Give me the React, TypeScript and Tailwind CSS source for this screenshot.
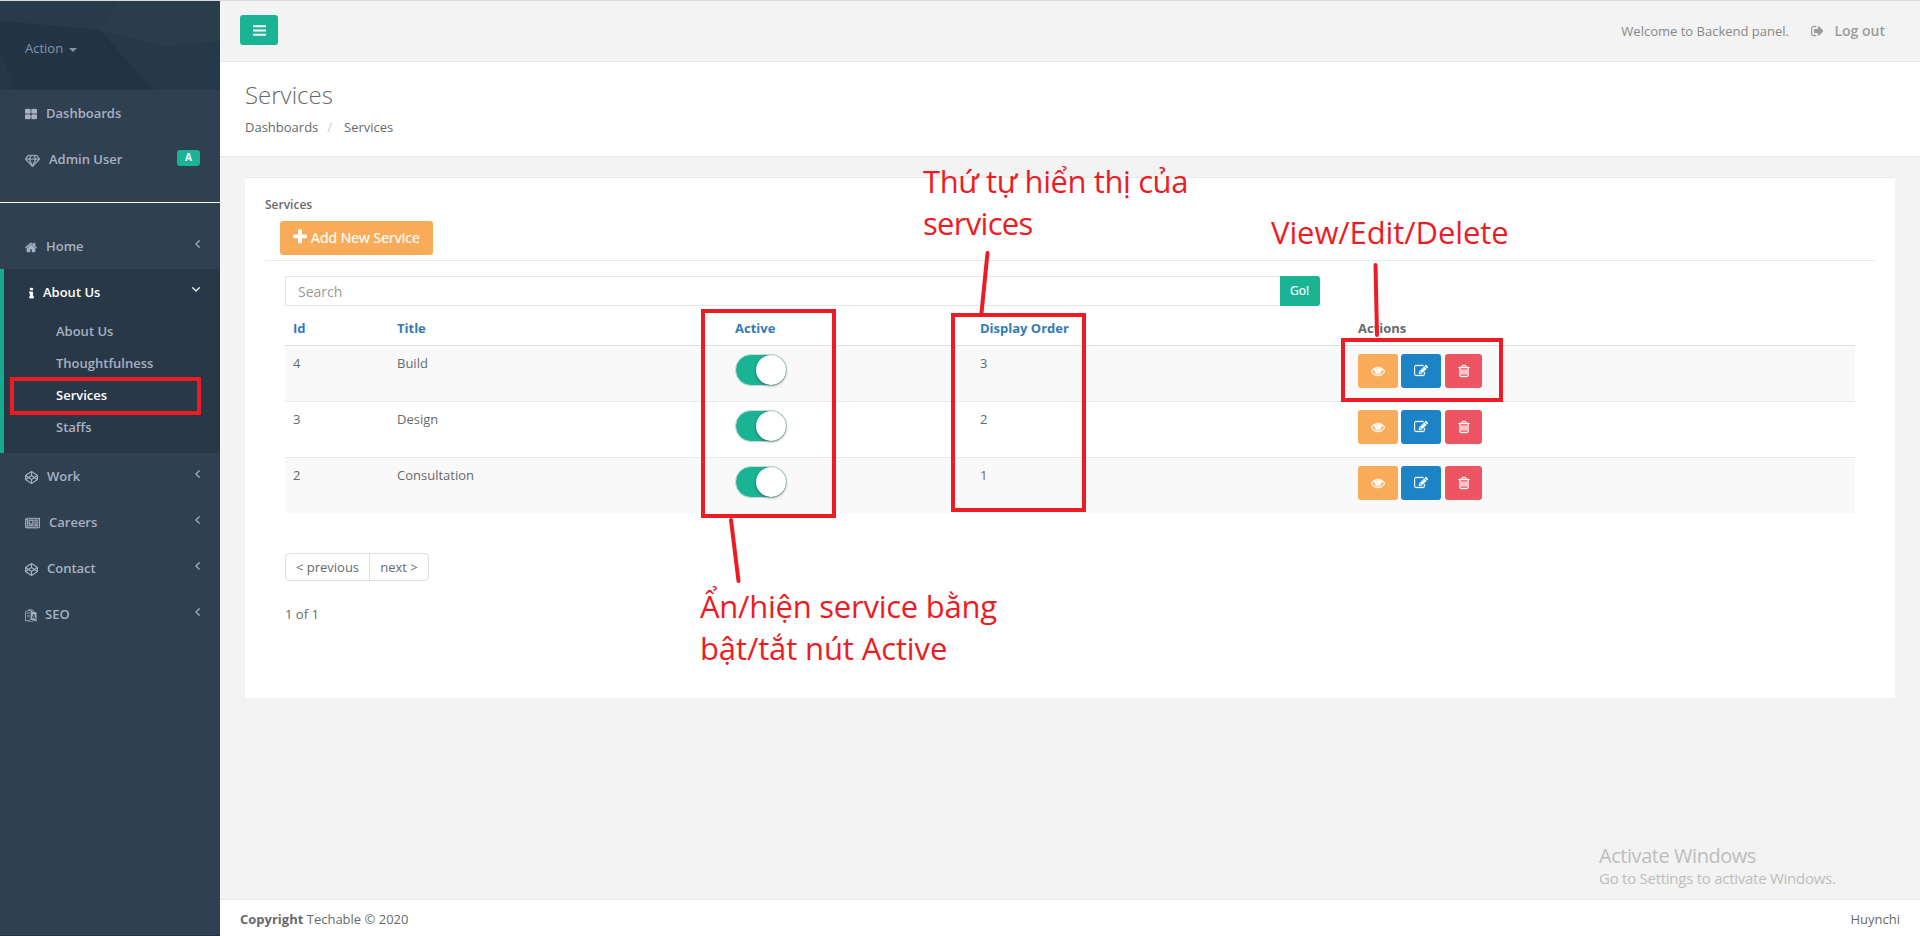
import React from "react";
import { FaCodepen } from "react-icons/fa";

const RED = "#ed1c24";

const PATHS = {
  thLarge:
    "M832 1024v384q0 52-38 90t-90 38h-512q-52 0-90-38t-38-90v-384q0-52 38-90t90-38h512q52 0 90 38t38 90zm0-768v384q0 52-38 90t-90 38h-512q-52 0-90-38t-38-90v-384q0-52 38-90t90-38h512q52 0 90 38t38 90zm896 768v384q0 52-38 90t-90 38h-512q-52 0-90-38t-38-90v-384q0-52 38-90t90-38h512q52 0 90 38t38 90zm0-768v384q0 52-38 90t-90 38h-512q-52 0-90-38t-38-90v-384q0-52 38-90t90-38h512q52 0 90 38t38 90z",
  diamond:
    "M212 768l623 665-300-665h-323zm812 772l349-772h-698zM538 640l204-384h-262l-288 384h346zm675 793l623-665h-323zm-530-793h682l-204-384h-274zm827 0h346l-288-384h-262zm141-487l384 512q14 18 13 41.500t-17 40.500l-960 1024q-18 20-47 20t-47-20l-960-1024q-16-17-17-40.500t13-41.500l384-512q18-25 51-25h1152q33 0 51 25z",
  home: "M1472 992v480q0 26-19 45t-45 19h-384v-384h-256v384h-384q-26 0-45-19t-19-45v-480q0-1 .5-3t.5-3l575-474 575 474q1 2 1 6zm223-69l-62 74q-8 9-21 11h-3q-13 0-21-7l-692-577-692 577q-12 8-24 7-13-2-21-11l-62-74q-8-10-7-23.500t11-21.500l719-599q32-26 76-26t76 26l244 204v-195q0-14 9-23t23-9h192q14 0 23 9t9 23v408l219 182q10 8 11 21.500t-7 23.500z",
  info: "M1216 1344v128q0 26-19 45t-45 19h-512q-26 0-45-19t-19-45v-128q0-26 19-45t45-19h64v-384h-64q-26 0-45-19t-19-45v-128q0-26 19-45t45-19h384q26 0 45 19t19 45v576h64q26 0 45 19t19 45zm-128-1152v192q0 26-19 45t-45 19h-256q-26 0-45-19t-19-45v-192q0-26 19-45t45-19h256q26 0 45 19t19 45z",
  newspaper:
    "M1024 512h-384v384h384v-384zm128 640v128h-640v-128h640zm0-768v640h-640v-640h640zm640 768v128h-512v-128h512zm0-256v128h-512v-128h512zm0-256v128h-512v-128h512zm0-256v128h-512v-128h512zm-1536 960v-960h-128v960q0 26 19 45t45 19 45-19 19-45zm1664 0v-1088h-1536v1088q0 33-11 64h1483q26 0 45-19t19-45zm128-1216v1216q0 80-56 136t-136 56h-1664q-80 0-136-56t-56-136v-1088h256v-128h1792z",
  angleLeft:
    "M1203 544q0 13-10 23l-393 393 393 393q10 10 10 23t-10 23l-50 50q-10 10-23 10t-23-10l-466-466q-10-10-10-23t10-23l466-466q10-10 23-10t23 10l50 50q10 10 10 23z",
  angleDown:
    "M1395 736q0 13-10 23l-466 466q-10 10-23 10t-23-10l-466-466q-10-10-10-23t10-23l50-50q10-10 23-10t23 10l393 393 393-393q10-10 23-10t23 10l50 50q10 10 10 23z",
  plus: "M1600 736v192q0 40-28 68t-68 28h-416v416q0 40-28 68t-68 28h-192q-40 0-68-28t-28-68v-416h-416q-40 0-68-28t-28-68v-192q0-40 28-68t68-28h416v-416q0-40 28-68t68-28h192q40 0 68 28t28 68v416h416q40 0 68 28t28 68z",
  eye: "M1664 960q-152-236-381-353 61 104 61 225 0 185-131.500 316.500t-316.500 131.500-316.500-131.500-131.500-316.500q0-121 61-225-229 117-381 353 133 205 333.500 326.500t434.500 121.500 434.500-121.500 333.500-326.500zm-720-384q0-20-14-34t-34-14q-125 0-214.500 89.500t-89.500 214.500q0 20 14 34t34 14 34-14 14-34q0-86 61-147t147-61q20 0 34-14t14-34zm848 384q0 34-20 69-140 230-376.500 368.500t-499.500 138.500-499.500-139-376.500-368q-20-35-20-69t20-69q140-229 376.500-368t499.500-139 499.500 139 376.500 368q20 35 20 69z",
  edit: "M888 1184l116-116-152-152-116 116v56h96v96h56zm440-720q-16-16-33 1l-350 350q-17 17-1 33t33-1l350-350q17-17 1-33zm80 594v190q0 119-84.500 203.500t-203.500 84.500h-832q-119 0-203.500-84.500t-84.500-203.500v-832q0-119 84.500-203.500t203.500-84.500h832q63 0 117 25 15 7 18 23 3 17-9 29l-49 49q-14 14-32 8-23-6-45-6h-832q-66 0-113 47t-47 113v832q0 66 47 113t113 47h832q66 0 113-47t47-113v-126q0-13 9-22l64-64q15-15 35-7t20 29zm-96-738l288 288-672 672h-288v-288zm444 132l-92 92-288-288 92-92q28-28 68-28t68 28l152 152q28 28 28 68t-28 68z",
  trash:
    "M704 736v576q0 14-9 23t-23 9h-64q-14 0-23-9t-9-23v-576q0-14 9-23t23-9h64q14 0 23 9t9 23zm256 0v576q0 14-9 23t-23 9h-64q-14 0-23-9t-9-23v-576q0-14 9-23t23-9h64q14 0 23 9t9 23zm256 0v576q0 14-9 23t-23 9h-64q-14 0-23-9t-9-23v-576q0-14 9-23t23-9h64q14 0 23 9t9 23zm128 724v-948h-896v948q0 22 7 40.500t14.500 27 10.500 8.500h832q3 0 10.500-8.500t14.500-27 7-40.500zm-672-1076h448l-48-117q-7-9-17-11h-317q-10 2-17 11zm928 32v64q0 14-9 23t-23 9h-96v948q0 83-47 143.500t-113 60.500h-832q-66 0-113-58.500t-47-141.500v-952h-96q-14 0-23-9t-9-23v-64q0-14 9-23t23-9h309l70-167q15-37 54-63t79-26h320q40 0 79 26t54 63l70 167h309q14 0 23 9t9 23z",
  signOut:
    "M704 1440q0 4 1 20t.5 26.500-3 23.500-10 19.500-20.500 6.500h-320q-119 0-203.500-84.500t-84.500-203.500v-704q0-119 84.500-203.500t203.500-84.500h320q13 0 22.500 9.500t9.500 22.500q0 4 1 20t.5 26.500-3 23.500-10 19.500-20.500 6.500h-320q-66 0-113 47t-47 113v704q0 66 47 113t113 47h312l11.500 1 11.500 3 8 5.500 7 9 2 13.500zm928-544q0 26-19 45l-544 544q-19 19-45 19t-45-19-19-45v-288h-448q-26 0-45-19t-19-45v-384q0-26 19-45t45-19h448v-288q0-26 19-45t45-19 45 19l544 544q19 19 19 45z",
  bars: "M1664 1344v128q0 26-19 45t-45 19h-1408q-26 0-45-19t-19-45v-128q0-26 19-45t45-19h1408q26 0 45 19t19 45zm0-512v128q0 26-19 45t-45 19h-1408q-26 0-45-19t-19-45v-128q0-26 19-45t45-19h1408q26 0 45 19t19 45zm0-512v128q0 26-19 45t-45 19h-1408q-26 0-45-19t-19-45v-128q0-26 19-45t45-19h1408q26 0 45 19t19 45z",
};

function Icon({ name, box = "0 0 1792 1792", className, bold }: { name: keyof typeof PATHS; box?: string; className: string; bold?: boolean }) {
  return (
    <svg viewBox={box} className={`shrink-0 ${className}`} fill="currentColor" stroke={bold ? "currentColor" : "none"} strokeWidth={40}>
      <path d={PATHS[name]} />
    </svg>
  );
}

function TranslateIcon() {
  return (
    <svg viewBox="0 0 12 13" className="h-[13px] w-3 shrink-0" fill="none" stroke="currentColor">
      <path d="M0.500 2.500L6 1v9.500L0.500 12z" strokeWidth="0.8" />
      <path d="M1.500 4.500l3.500-1M3 4v1M2 8.500l2.500-3M2.300 6l2.500 2.500" strokeWidth="0.7" />
      <path d="M6 2l5.600 1.600v9L6 10.800z" fill="currentColor" stroke="none" />
      <path d="M7.300 9.600L8.700 5l1.700 5.500M7.800 8.200l2 .6" stroke="#2f4050" strokeWidth="0.9" />
      <path d="M3 0.800Q6 0.200 9 1.600M3 12.500q2.500.6 5-.2" strokeWidth="0.7" />
    </svg>
  );
}

function NavItem({ icon, label, gap, arrow, badge }: { icon: React.ReactNode; label: string; gap: string; arrow?: boolean; badge?: string }) {
  return (
    <li className="flex h-[46px] items-center pl-[25px] pr-5 pt-[2px]">
      {icon}
      <span className={gap}>{label}</span>
      {badge && (
        <span className="mb-[5px] ml-auto flex h-4 w-[23px] items-center justify-center rounded-[3px] bg-[#1ab394] text-[10px] font-bold text-white">
          {badge}
        </span>
      )}
      {arrow && <Icon name="angleLeft" box="576 448 640 1024" className="mb-[7px] ml-auto h-[8px] w-[5px]" bold />}
    </li>
  );
}

const SUB = ["About Us", "Thoughtfulness", "Services", "Staffs"];

function Sidebar() {
  return (
    <aside className="flex w-[220px] shrink-0 flex-col border-b border-[#243342] bg-[#2f4050] text-[13px] font-semibold text-[#a7b1c2]">
      <div className="relative h-[89px] bg-[#263949]">
        <svg viewBox="0 0 220 89" className="absolute inset-0 h-[89px] w-[220px]">
          <path d="M0 0H118L99 29L0 20z" fill="#273b4a" />
          <path d="M118 0H220V40L165 46L99 29z" fill="#293d4b" />
          <path d="M0 20L99 29L153 89H0z" fill="#233545" />
          <path d="M0 50L15 89H0z" fill="#253847" />
          <path d="M99 29L153 89H130z" fill="#223343" />
        </svg>
        <div className="relative flex h-full items-center pl-[25px] pt-[6px] font-normal text-[#8095a8]">
          Action
          <span className="ml-[6px] mt-[3px] h-0 w-0 border-x-4 border-t-4 border-x-transparent border-t-[#8095a8]" />
        </div>
      </div>
      <ul className="border-b border-white pb-5">
        <NavItem icon={<Icon name="thLarge" box="64 0 1664 1792" className="h-[13px] w-3" bold />} label="Dashboards" gap="ml-[9px]" />
        <NavItem icon={<Icon name="diamond" box="0 0 2048 1792" className="h-[13px] w-[15px]" bold />} label="Admin User" gap="ml-[9px]" badge="A" />
      </ul>
      <ul className="pt-5">
        <NavItem icon={<Icon name="home" box="64 0 1664 1792" className="h-[13px] w-3" bold />} label="Home" gap="ml-[9px]" arrow />
        <li className="h-[184px] border-l-4 border-[#19aa8d] bg-[#293846]">
          <div className="flex h-[46px] items-center pl-[25px] pr-5 pt-[2px] text-white">
            <Icon name="info" box="576 0 640 1792" className="h-[13px] w-[5px]" bold />
            <span className="ml-[9px]">About Us</span>
            <Icon name="angleDown" box="384 640 1024 640" className="mb-[7px] ml-auto h-[5px] w-[8px]" bold />
          </div>
          <ul>
            {SUB.map((s) => (
              <li key={s} className={`flex h-8 items-center pl-[52px] pt-[2px] ${s === "Services" ? "text-white" : ""}`}>
                {s}
              </li>
            ))}
          </ul>
        </li>
        <NavItem icon={<FaCodepen className="h-[13px] w-[13px]" />} label="Work" gap="ml-[9px]" arrow />
        <NavItem icon={<Icon name="newspaper" box="0 0 2048 1792" className="h-[13px] w-[15px]" bold />} label="Careers" gap="ml-[9px]" arrow />
        <NavItem icon={<FaCodepen className="h-[13px] w-[13px]" />} label="Contact" gap="ml-[9px]" arrow />
        <NavItem icon={<TranslateIcon />} label="SEO" gap="ml-[8px]" arrow />
      </ul>
    </aside>
  );
}

const ROWS = [
  { id: 4, title: "Build", order: 3 },
  { id: 3, title: "Design", order: 2 },
  { id: 2, title: "Consultation", order: 1 },
];

const COLS = "grid grid-cols-[104px_338px_245px_378px_1fr] pl-2";

function Toggle() {
  return (
    <div className="flex h-8 w-[52px] justify-end rounded-full border border-[#cfd8d6] bg-[#1ab394]">
      <div className="h-[30px] w-[30px] rounded-full bg-white shadow-[0_1px_3px_rgba(0,0,0,0.4)]" />
    </div>
  );
}

function Row({ id, title, order, index }: { id: number; title: string; order: number; index: number }) {
  return (
    <div className={`${COLS} h-14 border-t pt-2 ${index === 0 ? "border-[#dddddd]" : "border-[#e7eaec]"} ${index % 2 === 0 ? "bg-[#f9f9f9]" : "bg-white"}`}>
      <span className="leading-[19px]">{id}</span>
      <span className="leading-[19px]">{title}</span>
      <Toggle />
      <span className="leading-[19px]">{order}</span>
      <div className="flex text-white">
        <button className="flex h-[34px] w-10 items-center justify-center rounded-[3px] bg-[#f8ac59]">
          <Icon name="eye" className="h-[14px] w-[14px]" bold />
        </button>
        <button className="ml-[3px] flex h-[34px] w-10 items-center justify-center rounded-[3px] bg-[#1c84c6]">
          <Icon name="edit" className="h-[14px] w-[14px]" bold />
        </button>
        <button className="ml-1 flex h-[34px] w-[37px] items-center justify-center rounded-[3px] bg-[#ed5565]">
          <Icon name="trash" className="h-[14px] w-[14px]" bold />
        </button>
      </div>
    </div>
  );
}

function Card() {
  return (
    <section className="ml-[25px] mr-[25px] mt-5 h-[521px] border-t border-[#e7eaec] bg-white px-5">
      <div className="border-b border-[#e7eaec] pb-[5px] pt-[17px]">
        <h5 className="h-[26px] text-[12px] font-semibold leading-[19px]">Services</h5>
        <button className="ml-[15px] flex h-[34px] w-[153px] items-center justify-center rounded-[3px] bg-[#f8ac59] pb-[2px] text-[14px] text-white">
          <Icon name="plus" box="192 0 1408 1792" className="mr-[4px] h-[18px] w-[14px]" />
          <span className="[-webkit-text-stroke:0.2px_white]">Add New Service</span>
        </button>
      </div>
      <div className="px-5 pt-[15px]">
        <div className="flex h-[30px] w-[1035px]">
          <div className="flex flex-1 items-center border border-r-0 border-[#e5e6e7] pl-3 text-[14px] text-[#999999]">Search</div>
          <button className="w-10 rounded-r-[3px] bg-[#1ab394] pr-px text-[12px] text-white [-webkit-text-stroke:0.2px_white]">Go!</button>
        </div>
        <div className={`${COLS} h-[39px] items-center pt-[6px] font-bold text-[#337ab7]`}>
          <span>Id</span>
          <span>Title</span>
          <span>Active</span>
          <span>Display Order</span>
          <span className="text-[#676a6c]">Actions</span>
        </div>
        {ROWS.map((r, i) => (
          <Row key={r.id} {...r} index={i} />
        ))}
        <div className="mt-10 flex h-7 w-36 rounded-[4px] border border-[#dddddd]">
          <span className="flex w-[84px] items-center justify-center border-r border-[#dddddd] pt-[2px]">&lt; previous</span>
          <span className="flex flex-1 items-center justify-center pt-[2px]">next &gt;</span>
        </div>
        <p className="mt-6 leading-[19px]">1 of 1</p>
      </div>
    </section>
  );
}

function Annotations() {
  return (
    <div className="pointer-events-none absolute inset-x-0 -top-px h-[936px] text-[31px] leading-[42px] text-[#ed1c24]">
      <div className="absolute left-[10px] top-[377px] h-[38px] w-[191px] border-4 border-[#ed1c24]" />
      <div className="absolute left-[701px] top-[309px] h-[209px] w-[135px] border-4 border-[#ed1c24]" />
      <div className="absolute left-[951px] top-[313px] h-[199px] w-[135px] border-4 border-[#ed1c24]" />
      <div className="absolute left-[1341px] top-[338px] h-[64px] w-[162px] border-4 border-[#ed1c24]" />
      <svg viewBox="0 0 1920 936" className="absolute inset-0 h-full w-full" stroke={RED} strokeWidth="4" strokeLinecap="round">
        <path d="M987.500 253L981.500 313" />
        <path d="M1375.500 265L1377 335" />
        <path d="M731 520L738.500 581" />
      </svg>
      <p className="absolute left-[923px] top-[160px] whitespace-nowrap">
        <span className="tracking-[-0.400px]">Thứ tự hiển thị của</span>
        <br />
        <span className="tracking-[-0.700px]">services</span>
      </p>
      <p className="absolute left-[1271px] top-[211px] whitespace-nowrap tracking-[-0.100px]">View/Edit/Delete</p>
      <p className="absolute left-[700px] top-[585px] whitespace-nowrap">
        <span className="tracking-[-0.250px]">Ẩn/hiện service bằng</span>
        <br />
        <span className="tracking-[-0.120px]">bật/tắt nút Active</span>
      </p>
    </div>
  );
}

export default function App() {
  return (
    <div className="relative flex h-[936px] w-[1920px] overflow-hidden border-t border-[#d8dadf] bg-[#f3f3f4] font-['Open_Sans',sans-serif] text-[13px] text-[#676a6c]">
      <Sidebar />
      <main className="flex min-w-0 flex-1 flex-col bg-[#f3f3f3]">
        <header className="flex h-[61px] items-start border-b border-[#e7e7e7] pl-5 pr-[35px]">
          <button className="mt-[14px] flex h-[30px] w-[38px] items-center justify-center rounded-[3px] bg-[#1ab394] text-white">
            <Icon name="bars" box="128 0 1536 1792" className="h-[15px] w-[13px]" />
          </button>
          <div className="ml-auto flex h-[60px] items-center text-[#888888]">
            <span className="pt-px">Welcome to Backend panel.</span>
            <Icon name="signOut" box="64 0 1568 1792" className="ml-[22px] h-[14px] w-[12.500px] text-[#999c9e]" bold />
            <span className="ml-[11px] pb-[2px] text-[14px] font-semibold text-[#999c9e]">Log out</span>
          </div>
        </header>
        <div className="h-[95px] border-b border-[#e7eaec] bg-white pl-[25px] pt-[20px]">
          <h2 className="text-[24px] font-light leading-[26px]">Services</h2>
          <div className="mt-[10px] flex leading-[19px]">
            <span>Dashboards</span>
            <span className="ml-[9px] text-[#cccccc]">/</span>
            <span className="ml-[12px]">Services</span>
          </div>
        </div>
        <Card />
        <footer className="mt-auto flex h-[37px] items-center justify-between border-t border-[#e7eaec] bg-white px-5 pt-[3px]">
          <span>
            <strong className="font-bold">Copyright</strong> Techable © 2020
          </span>
          <span>Huynchi</span>
        </footer>
      </main>
      <Annotations />
      <div className="absolute left-[1599px] top-[841px] whitespace-nowrap text-[#bdbdbd]">
        <p className="text-[20px] leading-[27px] tracking-[-0.450px]">Activate Windows</p>
        <p className="text-[15px] leading-[18px] tracking-[-0.260px]">Go to Settings to activate Windows.</p>
      </div>
    </div>
  );
}
